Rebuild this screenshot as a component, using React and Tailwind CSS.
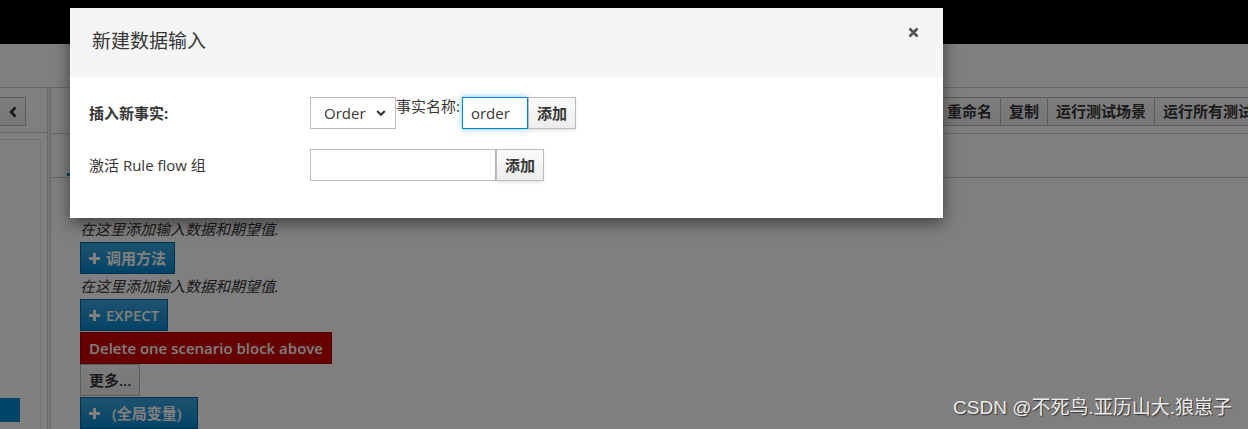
import React from "react";

const Plus = () => (
  <svg width="11" height="11" viewBox="0 0 11 11" className="shrink-0">
    <path d="M4 0h3v4h4v3H7v4H4V7H0V4h4z" fill="currentColor" />
  </svg>
);

const blueBtn =
  "flex items-center gap-[6px] h-[32px] px-[8px] text-[15px] font-semibold text-white border border-[#00659c] bg-linear-to-b from-[#39a5dc] to-[#0088ce]";
const grayBtn =
  "flex items-center h-[32px] px-[8px] text-[15px] font-semibold text-[#363636] border border-[#bbbbbb] bg-linear-to-b from-[#fafafa] to-[#ededed]";

const Page = () => (
  <div className="flex flex-col h-full bg-white">
    <div className="h-[44px] bg-black shrink-0" />
    <div className="h-[44px] border-b border-[#d1d1d1] shrink-0" />
    <div className="flex flex-1 min-h-0">
      {/* left column */}
      <div className="w-[47px] shrink-0 flex flex-col">
        <div className="h-[45px] border-b border-[#d1d1d1] pt-[9px]">
          <div className="w-[26px] h-[29px] border border-[#bbbbbb] border-l-0 bg-linear-to-b from-[#fafafa] to-[#ededed] flex items-center justify-center">
            <svg width="10" height="12" viewBox="0 0 10 12">
              <path d="M7.5 1.5 3 6l4.5 4.5" fill="none" stroke="#363636" strokeWidth="2.6" />
            </svg>
          </div>
        </div>
        <div className="mt-[6px] w-[41px] flex-1 border-t border-r border-[#e5e5e5] pt-[258px]">
          <div className="w-[20px] h-[24px] bg-[#0088ce]" />
        </div>
      </div>
      <div className="w-[4px] shrink-0 border-l border-r border-[#d1d1d1] bg-[#f0f0f0]" />
      {/* main */}
      <div className="flex-1 min-w-0 flex flex-col">
        <div className="h-[46px] border-b border-[#d1d1d1] flex justify-end items-start pt-[9px] -mr-[44px]">
          {["重命名", "复制", "运行测试场景", "运行所有测试场景"].map((t) => (
            <div
              key={t}
              className="h-[29px] px-[8px] flex items-center border border-[#bbbbbb] -ml-px bg-linear-to-b from-[#fafafa] to-[#ededed] text-[15px] font-bold text-[#363636] whitespace-nowrap"
            >
              {t}
            </div>
          ))}
        </div>
        <div className="h-[44px] border-b border-[#d1d1d1] pl-[16px] flex items-end">
          <div className="w-[40px] h-[3px] mb-[1px] bg-[#0088ce]" />
        </div>
        <div className="pl-[29px] pt-[38px] flex flex-col items-start">
          <div className="h-[26px] leading-[26px] text-[15px] italic text-[#363636]">
            在这里添加输入数据和期望值.
          </div>
          <div className={blueBtn}>
            <Plus />
            调用方法
          </div>
          <div className="h-[25px] leading-[25px] text-[15px] italic text-[#363636]">
            在这里添加输入数据和期望值.
          </div>
          <div className={blueBtn}>
            <Plus />
            EXPECT
          </div>
          <div className="mt-[1px] h-[32px] px-[8px] flex items-center text-[15px] font-semibold text-white border border-[#a30000] bg-[#cc0000]">
            Delete one scenario block above
          </div>
          <div className={grayBtn}>更多...</div>
          <div className={blueBtn + " mt-[1px] pr-[15px]"}>
            <Plus />
            <span className="ml-[6px]">(全局变量)</span>
          </div>
        </div>
      </div>
    </div>
  </div>
);

const Modal = () => (
  <div className="absolute left-[70px] top-[8px] w-[873px] bg-white shadow-[0_5px_15px_rgba(0,0,0,0.5)]">
    <div className="h-[69px] bg-[#f5f5f5] flex items-center justify-between pl-[22px] pr-[24px]">
      <div className="text-[19px] text-[#363636] -mt-[2px]">新建数据输入</div>
      <svg width="11" height="11" viewBox="0 0 11 11" className="-mt-[20px]">
        <path d="M1.5 1.5l8 8M9.5 1.5l-8 8" stroke="#4d5258" strokeWidth="2.6" />
      </svg>
    </div>
    <div className="pl-[19px] pt-[20px] pb-[37px] flex flex-col gap-[20px] text-[#363636]">
      <div className="flex items-stretch h-[32px]">
        <div className="w-[221px] flex items-center text-[15px] font-bold">插入新事实:</div>
        <div className="w-[86px] border border-[#bbbbbb] flex items-center justify-between pl-[13px] pr-[9px] text-[15px]">
          <span>Order</span>
          <svg width="10" height="8" viewBox="0 0 10 8">
            <path d="M1.2 2 5 5.8 8.8 2" fill="none" stroke="#363636" strokeWidth="2.2" />
          </svg>
        </div>
        <div className="self-start text-[15px] leading-[20px] -mt-[1px] pr-[2px] whitespace-nowrap">事实名称:</div>
        <input
          readOnly
          value="order"
          className="w-[66px] h-[32px] border border-[#0088ce] px-[8px] text-[15px] text-[#363636] outline-none shadow-[0_0_6px_rgba(0,136,206,0.5)]"
        />
        <div className="w-[48px] h-[32px] border border-[#bbbbbb] flex items-center justify-center text-[15px] font-bold bg-linear-to-b from-[#fafafa] to-[#ededed] shadow-[0_2px_3px_rgba(3,3,3,0.1)]">
          添加
        </div>
      </div>
      <div className="flex items-stretch h-[32px]">
        <div className="w-[221px] flex items-center text-[15px]">激活 Rule flow 组</div>
        <input
          readOnly
          value=""
          className="w-[186px] h-[32px] border border-[#bbbbbb] px-[8px] text-[15px] outline-none"
        />
        <div className="w-[48px] h-[32px] border border-[#bbbbbb] flex items-center justify-center text-[15px] font-bold bg-linear-to-b from-[#fafafa] to-[#ededed] shadow-[0_2px_3px_rgba(3,3,3,0.1)]">
          添加
        </div>
      </div>
    </div>
  </div>
);

export default function App() {
  return (
    <div className="relative w-[1248px] h-[429px] overflow-hidden font-['Open_Sans','Noto_Sans_CJK_SC',sans-serif]">
      <Page />
      <div className="absolute inset-0 bg-black/50" />
      <Modal />
      <div className="absolute right-[16px] bottom-[7px] text-[19px] text-[#ececec] font-['Liberation_Sans','Noto_Sans_CJK_SC',sans-serif] [text-shadow:1px_1px_1px_#333]">
        CSDN @不死鸟.亚历山大.狼崽子
      </div>
    </div>
  );
}
